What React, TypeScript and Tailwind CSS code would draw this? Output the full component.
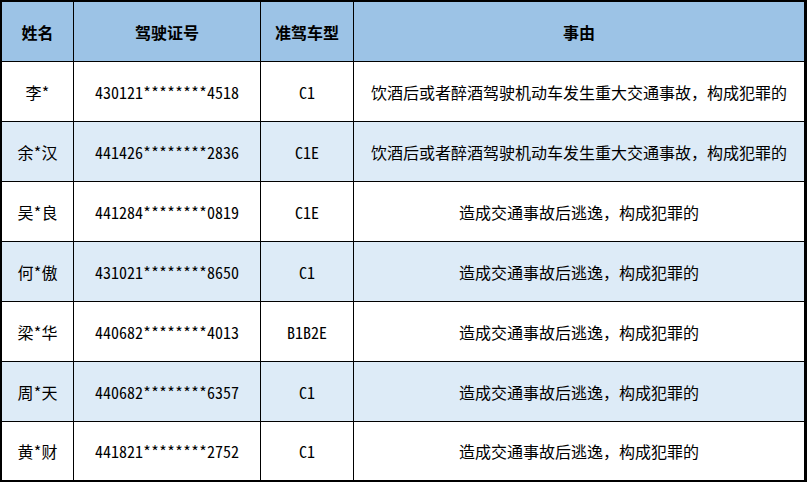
import React from "react";

const rows = [
  ["李*", "430121********4518", "C1", "饮酒后或者醉酒驾驶机动车发生重大交通事故，构成犯罪的"],
  ["余*汉", "441426********2836", "C1E", "饮酒后或者醉酒驾驶机动车发生重大交通事故，构成犯罪的"],
  ["吴*良", "441284********0819", "C1E", "造成交通事故后逃逸，构成犯罪的"],
  ["何*傲", "431021********8650", "C1", "造成交通事故后逃逸，构成犯罪的"],
  ["梁*华", "440682********4013", "B1B2E", "造成交通事故后逃逸，构成犯罪的"],
  ["周*天", "440682********6357", "C1", "造成交通事故后逃逸，构成犯罪的"],
  ["黄*财", "441821********2752", "C1", "造成交通事故后逃逸，构成犯罪的"],
];

const headers = ["姓名", "驾驶证号", "准驾车型", "事由"];

export default function App() {
  return (
    <div
      className="w-[807px] h-[482px] bg-white border-l-2 border-t-2 border-r-[3px] border-b-2 border-black grid grid-cols-[72px_187px_93px_450px] grid-rows-[60px_60px_60px_60px_60px_60px_60px_58px] text-[16px] text-black"
      style={{ fontFamily: '"Noto Sans Mono CJK SC", "Noto Sans CJK SC", "Liberation Mono", monospace' }}
    >
      {headers.map((h, i) => (
        <div
          key={h}
          className={`flex items-center justify-center bg-[#9cc3e6] font-bold border-b border-black ${i < 3 ? "border-r" : ""}`}
        >
          {h}
        </div>
      ))}
      {rows.map((r, ri) =>
        r.map((c, ci) => (
          <div
            key={`${ri}-${ci}`}
            className={`flex items-center justify-center border-black ${ri % 2 === 1 ? "bg-[#ddebf7]" : "bg-white"} ${ci < 3 ? "border-r" : ""} ${ri < 6 ? "border-b" : ""}`}
          >
            {c}
          </div>
        ))
      )}
    </div>
  );
}
